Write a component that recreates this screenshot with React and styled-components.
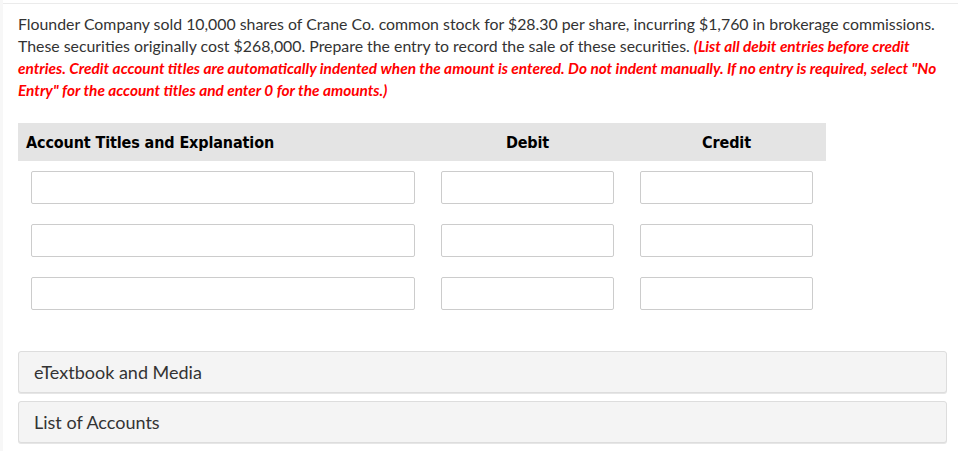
import React from "react";
import styled, { createGlobalStyle } from "styled-components";

const GlobalStyle = createGlobalStyle`
  html, body {
    margin: 0;
    padding: 0;
    background: #ffffff;
  }
  body {
    font-family: Lato, "Open Sans", sans-serif;
    color: #333333;
  }
`;

const Page = styled.div`
  display: flex;
  min-height: 451px;
`;

const Gutter = styled.div`
  width: 3px;
  flex: none;
  background: #f7f7f7;
`;

const Main = styled.div`
  flex: 1;
  padding-top: 3px;
`;

const Card = styled.div`
  border-top: 1px solid #ebebeb;
  padding: 9px 11px 0 15px;
`;

const Question = styled.p`
  margin: 0;
  font-size: 15.85px;
  line-height: 22px;
  color: #333333;
`;

const Hint = styled.span`
  color: #ff0000;
  font-size: 15.4px;
  font-weight: 700;
  font-style: italic;
`;

const Table = styled.table`
  width: 808px;
  margin-top: 22px;
  border-collapse: collapse;
  table-layout: fixed;
`;

const Th = styled.th`
  box-sizing: border-box;
  height: 38px;
  padding: 0 8px;
  background: #e4e4e4;
  color: #000000;
  font-family: "DejaVu Sans Condensed", "DejaVu Sans", sans-serif;
  font-size: 16px;
  font-weight: 700;
  letter-spacing: -0.12px;
  text-align: ${({ $align }) => $align || "left"};
  width: ${({ $width }) => $width}px;
`;

const Td = styled.td`
  padding: 10px 13px;
`;

const Input = styled.input`
  display: block;
  box-sizing: border-box;
  width: 100%;
  height: 33px;
  margin: 0;
  border: 1px solid #cccccc;
  border-radius: 2px;
  background: #ffffff;
  font-family: Lato, sans-serif;
  font-size: 15px;
`;

const Panels = styled.div`
  display: flex;
  flex-direction: column;
  gap: 8px;
  margin-top: 31px;
`;

const Panel = styled.div`
  box-sizing: border-box;
  height: 42px;
  display: flex;
  align-items: center;
  padding: 0 15px;
  background: #f4f4f4;
  border: 1px solid #dddddd;
  border-radius: 3px;
  box-shadow: 0 1px 0 #e6e6e6;
  font-size: 18px;
  color: #333333;
`;

const rows = [1, 2, 3];

export default function App() {
  return (
    <>
      <GlobalStyle />
      <Page>
        <Gutter />
        <Main>
          <Card>
            <Question>
              Flounder Company sold 10,000 shares of Crane Co. common stock for
              $28.30 per share, incurring $1,760 in brokerage commissions. These
              securities originally cost $268,000. Prepare the entry to record
              the sale of these securities.{" "}
              <Hint>
                (List all debit entries before credit entries. Credit account
                titles are automatically indented when the amount is entered. Do
                not indent manually. If no entry is required, select "No Entry"
                for the account titles and enter 0 for the amounts.)
              </Hint>
            </Question>

            <Table>
              <thead>
                <tr>
                  <Th $width={410}>Account Titles and Explanation</Th>
                  <Th $width={199} $align="center">Debit</Th>
                  <Th $width={199} $align="center">Credit</Th>
                </tr>
              </thead>
              <tbody>
                {rows.map(r => (
                  <tr key={r}>
                    <Td>
                      <Input type="text" />
                    </Td>
                    <Td>
                      <Input type="text" />
                    </Td>
                    <Td>
                      <Input type="text" />
                    </Td>
                  </tr>
                ))}
              </tbody>
            </Table>

            <Panels>
              <Panel>eTextbook and Media</Panel>
              <Panel>List of Accounts</Panel>
            </Panels>
          </Card>
        </Main>
      </Page>
    </>
  );
}
